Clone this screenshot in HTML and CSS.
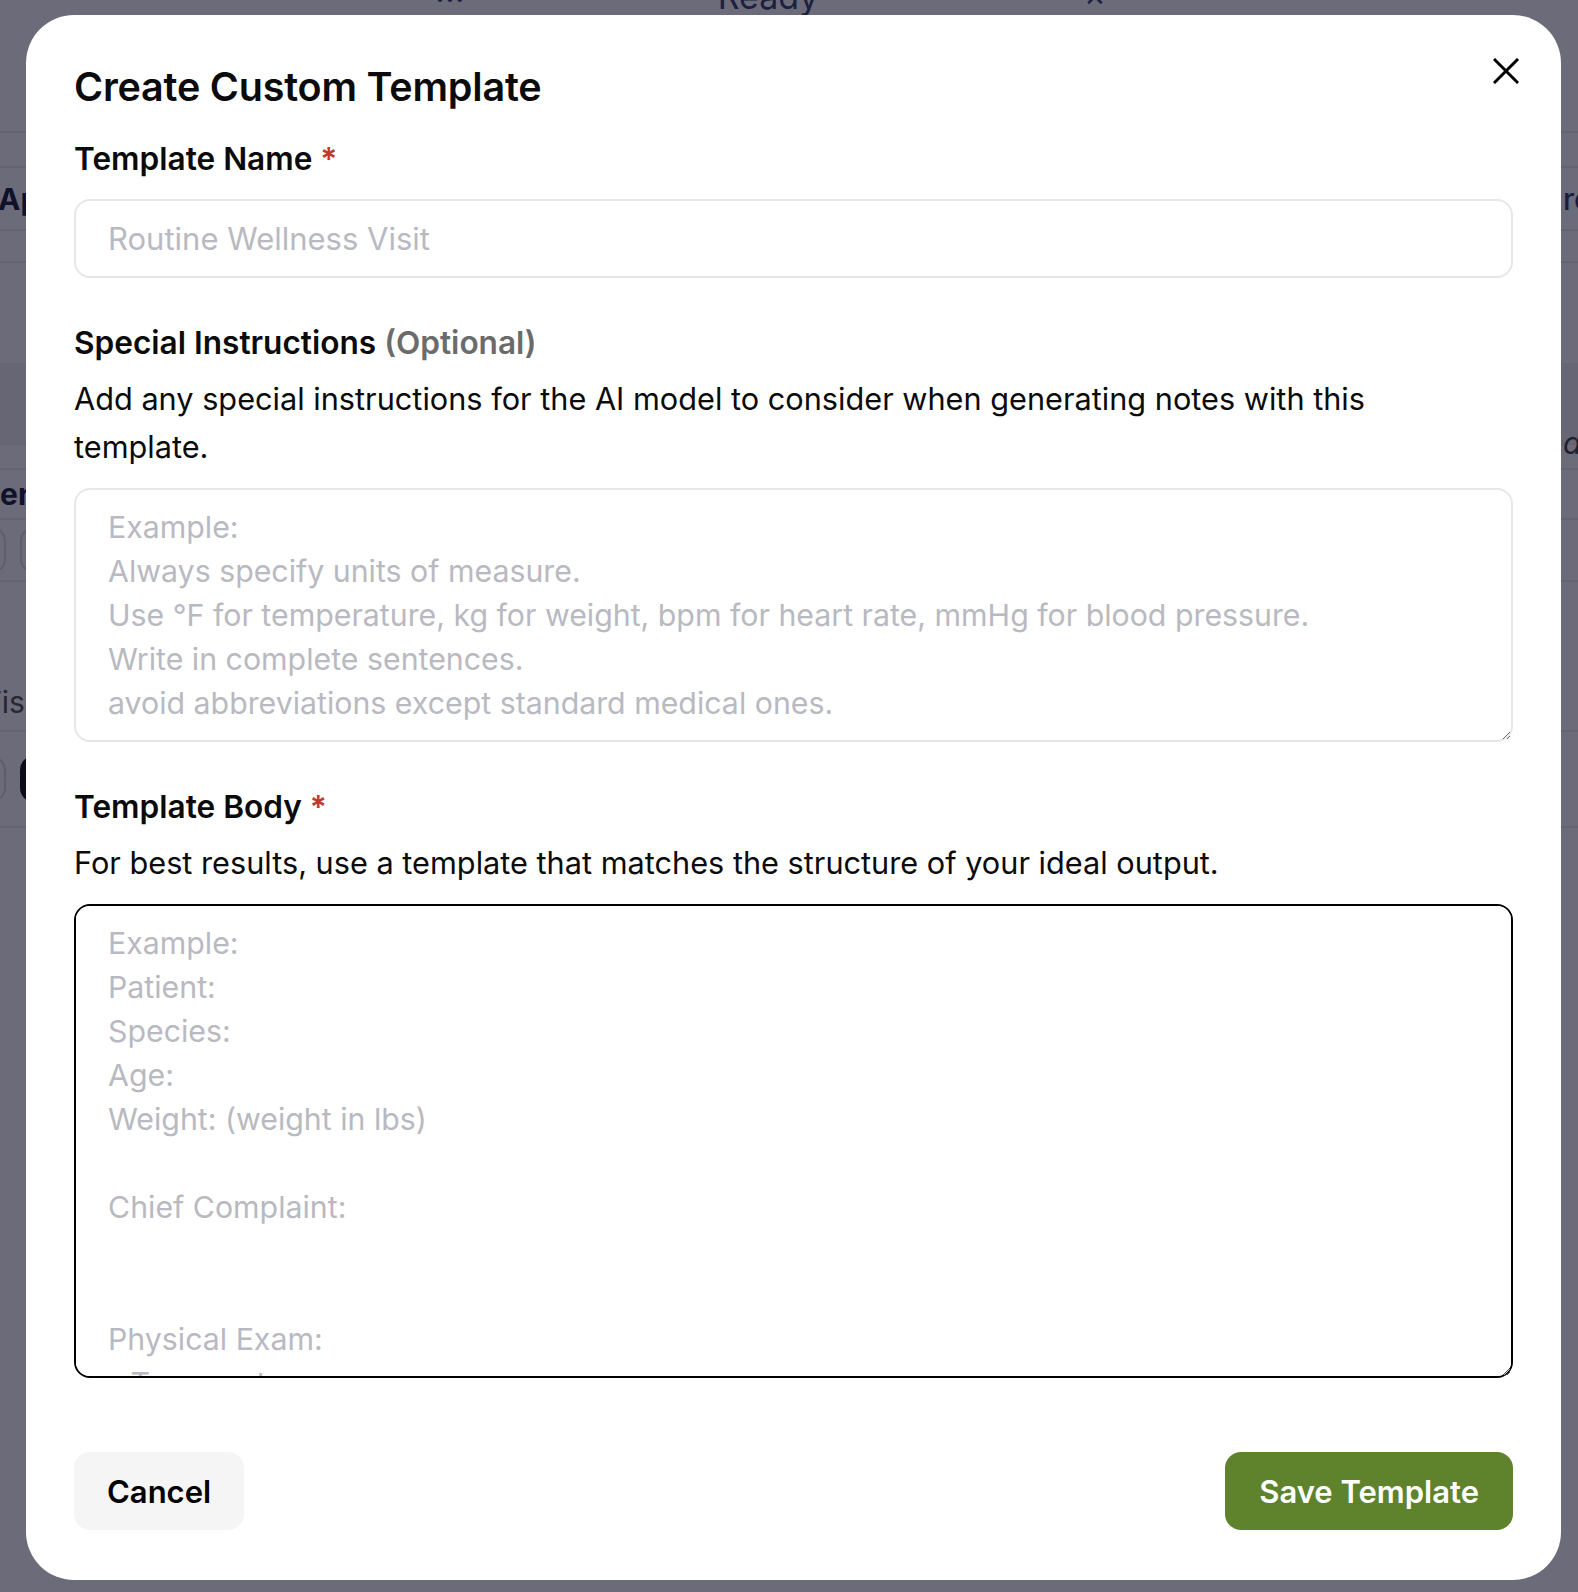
FILE: index.html
```html
<!DOCTYPE html>
<html lang="en">
<head>
    <meta charset="UTF-8">
    <meta name="viewport" content="width=device-width, initial-scale=1.0">
    <title>Create Custom Template</title>
    <link rel="stylesheet" href="styles.css">
</head>
<body>
    <!-- App behind the dialog (mostly covered) -->
    <div class="page">
        <header class="topbar">
            <span class="topbar-dots">•••</span>
            <span class="topbar-status">Ready</span>
            <span class="topbar-x">✕</span>
        </header>
        <div class="page-row row-h35"></div>
        <div class="page-row row-title">
            <span class="row-left">Appointments</span>
            <span class="row-right">review</span>
        </div>
        <div class="page-row row-h32"></div>
        <div class="page-gap"></div>
        <div class="page-band">
            <span class="row-italic">draft</span>
        </div>
        <div class="page-row row-h25"></div>
        <div class="page-row row-sub">
            <span class="row-left row-left-en">Open visits</span>
        </div>
        <div class="page-row row-pills">
            <span class="pill pill-edge"></span>
            <span class="pill"></span>
        </div>
        <div class="page-row row-muted">
            <span class="row-left row-left-visit">Visit</span>
        </div>
        <div class="page-row row-pills row-pills-last">
            <span class="pill pill-edge"></span>
            <span class="pill pill-dark"></span>
        </div>
    </div>

    <div class="overlay">
        <div class="modal">
            <button class="close-btn" aria-label="Close">
                <svg width="26" height="26" viewBox="0 0 26 26" fill="none" stroke="#000" stroke-width="3" stroke-linecap="square">
                    <path d="M2 2 L24 24 M24 2 L2 24"/>
                </svg>
            </button>

            <h2 class="modal-title">Create Custom Template</h2>

            <div class="field field-first">
                <label class="field-label" for="templateName">Template Name <span class="req">*</span></label>
                <input type="text" id="templateName" class="text-input" placeholder="Routine Wellness Visit">
            </div>

            <div class="field">
                <label class="field-label" for="instructions">Special Instructions <span class="optional">(Optional)</span></label>
                <p class="field-help">Add any special instructions for the AI model to consider when generating notes with this template.</p>
                <textarea id="instructions" class="text-area area-small" placeholder="Example:&#10;Always specify units of measure.&#10;Use °F for temperature, kg for weight, bpm for heart rate, mmHg for blood pressure.&#10;Write in complete sentences.&#10;avoid abbreviations except standard medical ones."></textarea>
            </div>

            <div class="field">
                <label class="field-label" for="templateBody">Template Body <span class="req">*</span></label>
                <p class="field-help">For best results, use a template that matches the structure of your ideal output.</p>
                <textarea id="templateBody" class="text-area area-large is-focused" placeholder="Example:&#10;Patient:&#10;Species:&#10;Age:&#10;Weight: (weight in lbs)&#10;&#10;Chief Complaint:&#10;&#10;&#10;Physical Exam:&#10;- Temperature:&#10;- Heart Rate:&#10;- Respiratory Rate:&#10;&#10;Assessment:&#10;&#10;Plan:"></textarea>
            </div>

            <div class="actions">
                <button class="btn btn-cancel">Cancel</button>
                <button class="btn btn-save">Save Template</button>
            </div>
        </div>
    </div>
</body>
</html>
```

FILE: styles.css
```css
/* Base */
* {
    box-sizing: border-box;
}

html, body {
    margin: 0;
    height: 100%;
}

body {
    font-family: Inter, "Noto Sans", Arial, sans-serif;
    background: #fff;
    color: #0b0b0b;
    overflow: hidden;
}

/* Page behind the overlay */
.page {
    height: 100%;
    color: #1b1f3b;
    overflow: hidden;
}

.topbar {
    display: flex;
    align-items: flex-start;
    height: 133px;
    border-bottom: 2px solid #ececf0;
    font-size: 34px;
    line-height: 1;
    color: #3b4472;
}

.topbar > span {
    margin-top: -20px;
}

.topbar-dots {
    margin-left: 436px;
    font-size: 14px;
    letter-spacing: 2px;
    padding-top: 12px;
}

.topbar-status {
    margin-left: 252px;
}

.topbar-x {
    margin-left: 266px;
    font-size: 26px;
    padding-top: 4px;
}

.page-row {
    display: flex;
    align-items: center;
    justify-content: space-between;
    border-bottom: 2px solid #ececf0;
    font-size: 30px;
}

.row-h35 { height: 35px; }
.row-h32 { height: 32px; }
.row-h25 { height: 25px; }

.row-title {
    height: 63px;
    font-weight: 700;
}

.row-sub {
    height: 50px;
    font-weight: 700;
}

.page-gap {
    height: 100px;
}

.page-band {
    display: flex;
    align-items: flex-end;
    justify-content: flex-end;
    height: 82px;
    background: #f3f3f5;
    border-bottom: 2px solid #ececf0;
    font-size: 30px;
}

.row-left {
    margin-left: -2px;
}

.row-left-en {
    margin-left: -42px;
}

.row-left-visit {
    margin-left: -19px;
    font-weight: 400;
    color: #555;
}

.row-right,
.row-italic {
    width: 100px;
    margin-right: -85px;
    white-space: nowrap;
}

.row-right {
    color: #2d3a78;
    font-weight: 500;
}

.row-italic {
    font-style: italic;
    color: #444;
    margin-bottom: -18px;
}

.row-muted {
    height: 150px;
    align-items: flex-end;
    padding-bottom: 10px;
}

.row-pills {
    height: 62px;
    justify-content: flex-start;
    gap: 14px;
}

.row-pills-last {
    height: 96px;
}

.pill {
    width: 70px;
    height: 46px;
    border: 2px solid #ddd;
    border-radius: 14px;
}

.pill-edge {
    margin-left: -64px;
}

.pill-dark {
    background: #111;
    border-color: #111;
}

/* Dialog */
.overlay {
    position: fixed;
    inset: 0;
    background: rgba(10, 8, 32, 0.6);
    display: flex;
    align-items: flex-start;
    padding: 15px 0 0 26px;
}

.modal {
    position: relative;
    width: 1535px;
    background: #fff;
    border-radius: 48px;
    padding: 48px 48px 50px;
}

.close-btn {
    position: absolute;
    top: 43px;
    right: 42px;
    padding: 0;
    border: none;
    background: none;
    line-height: 0;
    cursor: pointer;
}

.modal-title {
    margin: 0;
    font-size: 39.5px;
    line-height: 48px;
    font-weight: 600;
    letter-spacing: -0.2px;
}

.field {
    display: flex;
    flex-direction: column;
    margin-top: 41px;
}

.field-first {
    margin-top: 24px;
}

.field-label {
    font-size: 31.6px;
    line-height: 48px;
    font-weight: 600;
    margin-bottom: 16px;
}

.field-label + .field-help {
    margin-top: -8px;
}

.req {
    color: #bf3a2b;
}

.optional {
    color: #6b6b6b;
}

.field-help {
    max-width: 1390px;
    margin: 0 0 17px;
    font-size: 30.7px;
    line-height: 48px;
}

/* Inputs */
.text-input,
.text-area {
    width: 100%;
    font-family: inherit;
    font-size: 30.3px;
    color: #111;
    border: 2px solid #e7e7e9;
    border-radius: 16px;
    background: #fff;
    outline: none;
}

.text-input {
    height: 79px;
    padding: 0 32px;
    font-size: 31px;
}

.text-area {
    padding: 15px 32px;
    line-height: 44px;
    resize: vertical;
}

.area-small {
    height: 254px;
}

.area-large {
    height: 474px;
}

.text-input::placeholder,
.text-area::placeholder {
    color: #b9b9c1;
}

.is-focused {
    border-color: #000;
}

/* Footer buttons */
.actions {
    display: flex;
    justify-content: space-between;
    margin-top: 74px;
}

.btn {
    height: 78px;
    padding: 0 33px;
    border: none;
    border-radius: 16px;
    font-family: inherit;
    font-size: 31px;
    font-weight: 600;
    cursor: pointer;
}

.btn-cancel {
    background: #f5f5f5;
    color: #000;
}

.btn-save {
    background: #5e832c;
    color: #fff;
    padding: 0 34px;
}
```
